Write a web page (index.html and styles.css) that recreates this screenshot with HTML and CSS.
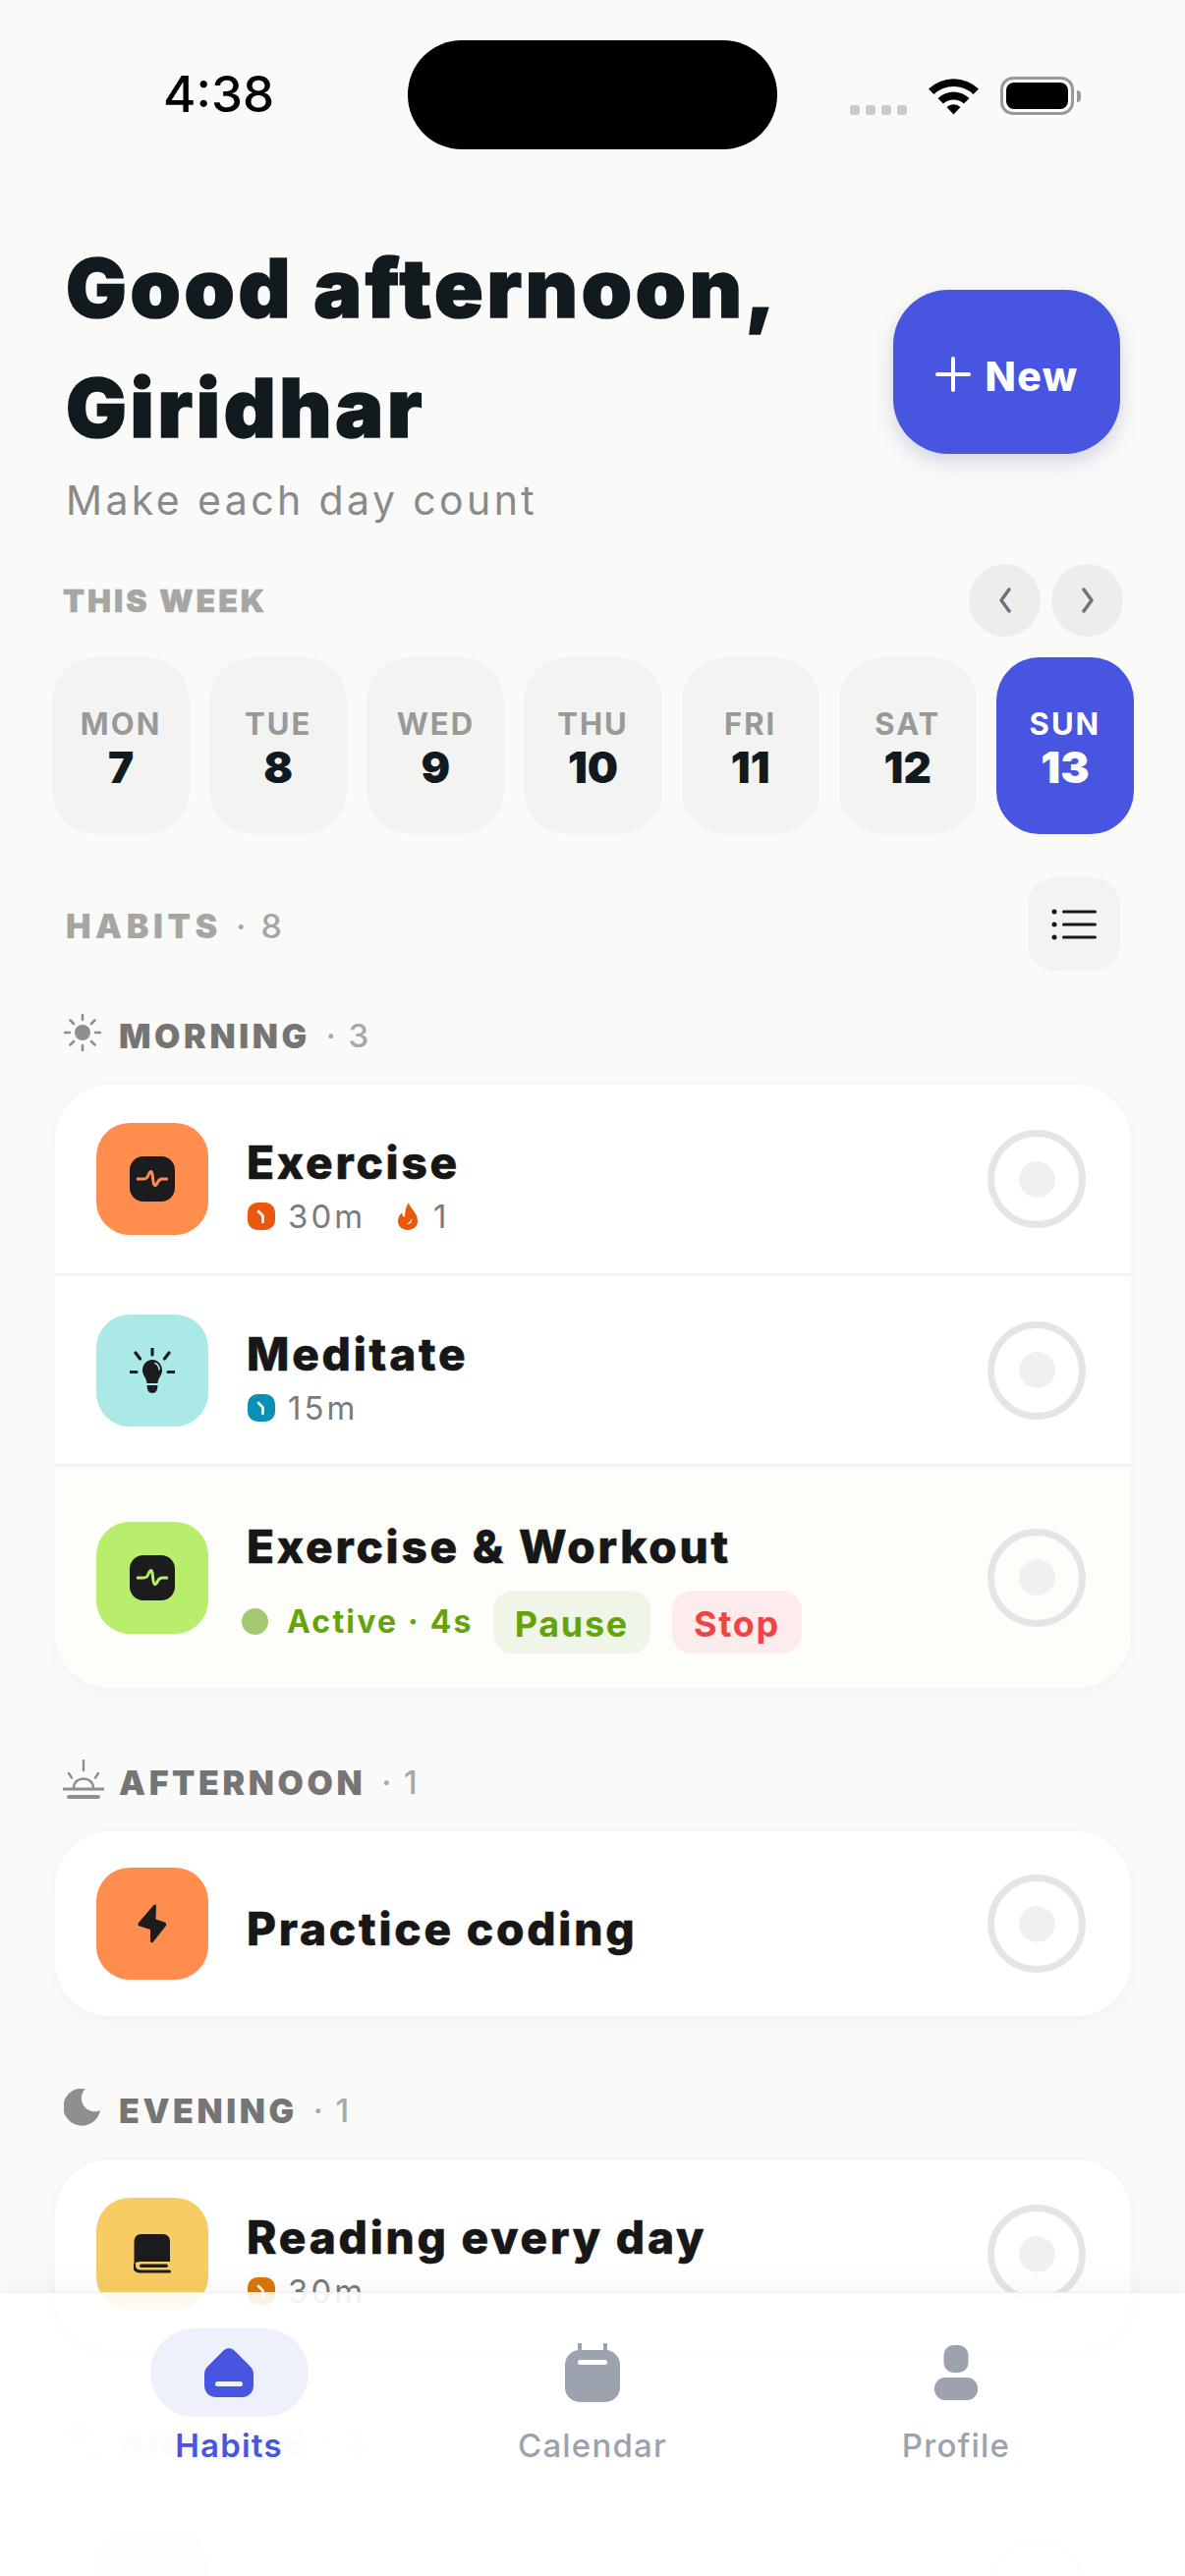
FILE: index.html
```html
<!DOCTYPE html>
<html lang="en">

<head>
  <meta charset="UTF-8">
  <meta name="viewport" content="width=device-width, initial-scale=1.0">
  <title>Habits</title>
  <link rel="stylesheet" href="styles.css">
</head>

<body>
  <div class="screen">
    <div class="status-bar">
      <div class="status-time">4:38</div>
      <div class="island"></div>
      <div class="status-icons">
        <div class="signal"><span></span><span></span><span></span><span></span></div>
        <svg class="wifi" width="51" height="38" viewBox="0 0 51 38">
          <path d="M0 11.5A37 37 0 0 1 51 11.5L45.500 17A29 29 0 0 0 5.500 17Z" />
          <path d="M9.500 21A23 23 0 0 1 41.500 21L36 26.500A15.500 15.500 0 0 0 15 26.500Z" />
          <path d="M18.500 30A10 10 0 0 1 32.500 30L25.500 37.500Z" />
        </svg>
        <div class="battery"><div class="battery-fill"></div></div>
        <div class="battery-nub"></div>
      </div>
    </div>

    <div class="greeting">
      <div class="greeting-text">
        <h1>Good afternoon,<br>Giridhar</h1>
        <p>Make each day count</p>
      </div>
      <button class="new-btn">
        <svg width="36" height="36" viewBox="0 0 36 36"><path d="M18 2V34M2 18H34" stroke="#fff" stroke-width="4" stroke-linecap="round" /></svg>
        <span>New</span>
      </button>
    </div>

    <div class="week-head">
      <div class="week-label">THIS WEEK</div>
      <div class="week-nav">
        <button class="round-btn"><svg width="20" height="26" viewBox="0 0 20 26"><path d="M14 2L6 13L14 24" class="chev" /></svg></button>
        <button class="round-btn"><svg width="20" height="26" viewBox="0 0 20 26"><path d="M6 2L14 13L6 24" class="chev" /></svg></button>
      </div>
    </div>

    <div class="days">
      <div class="day"><span class="day-name">MON</span><span class="day-num">7</span></div>
      <div class="day"><span class="day-name">TUE</span><span class="day-num">8</span></div>
      <div class="day"><span class="day-name">WED</span><span class="day-num">9</span></div>
      <div class="day"><span class="day-name">THU</span><span class="day-num">10</span></div>
      <div class="day"><span class="day-name">FRI</span><span class="day-num">11</span></div>
      <div class="day"><span class="day-name">SAT</span><span class="day-num">12</span></div>
      <div class="day active"><span class="day-name">SUN</span><span class="day-num">13</span></div>
    </div>

    <div class="habits-head">
      <div class="habits-label">HABITS <span>· 8</span></div>
      <button class="list-btn">
        <svg width="46" height="34" viewBox="0 0 46 34" fill="#171717">
          <circle cx="3" cy="4" r="2.500" /><circle cx="3" cy="17" r="2.500" /><circle cx="3" cy="30" r="2.500" />
          <rect x="11" y="2.500" width="35" height="3" rx="1.500" /><rect x="11" y="15.500" width="35" height="3" rx="1.500" /><rect x="11" y="28.500" width="35" height="3" rx="1.500" />
        </svg>
      </button>
    </div>

    <div class="group-head">
      <svg class="group-icon" width="38" height="38" viewBox="0 0 38 38" fill="#8f8f8f" stroke="#8f8f8f" stroke-width="2.600" stroke-linecap="round">
        <circle cx="19" cy="19" r="8" stroke="none" />
        <path d="M19 1V6M19 32V37M1 19H6M32 19H37M6.500 6.500L10 10M28 28L31.500 31.500M6.500 31.500L10 28M28 10L31.500 6.500" />
      </svg>
      <span class="group-name">MORNING</span><span class="group-count">· 3</span>
    </div>
    <div class="card">
      <div class="row">
        <div class="tile orange">
          <div class="tile-chip"><svg width="32" height="20" viewBox="0 0 32 20"><path d="M1 10H7C11 10 11 8 13 4C15 1 16 3 16.500 9C17 15 18 18 20 16C22 13 22 10 26 10H31" class="wave orange-line" /></svg></div>
        </div>
        <div class="row-body">
          <div class="row-title">Exercise</div>
          <div class="row-meta">
            <svg class="clock" width="28" height="28" viewBox="0 0 28 28"><rect width="28" height="28" rx="10" fill="#ea580c" /><path d="M11 9L15.500 13.500V20" class="hand" /></svg>
            <span class="meta-text">30m</span>
            <svg class="flame" width="20" height="28" viewBox="0 0 20 28"><path d="M11 0C12 6 20 10 20 19C20 24.500 15.500 28 10 28C4.500 28 0 24.500 0 19C0 15 2 12 4 10.500C4.500 13 5.500 14.500 7 15C7 9 8 4 11 0ZM14 16C13.500 19 11.500 20.500 9 21.500C11.500 22.500 15 20.500 14 16Z" fill="#ea580c" fill-rule="evenodd" /></svg>
            <span class="meta-text">1</span>
          </div>
        </div>
        <div class="check"><div class="check-dot"></div></div>
      </div>
      <div class="row">
        <div class="tile aqua">
          <svg width="46" height="46" viewBox="0 0 46 46">
            <path d="M23 0V7M6 5L10.500 11M40 5L35.500 11M0 24.500H7M39 24.500H46" stroke="#1c1c1e" stroke-width="3.200" stroke-linecap="round" />
            <path d="M23 12C29 12 33 17 33 23C33 28 29 30 28.500 36H17.500C17 30 13 28 13 23C13 17 17 12 23 12Z" fill="#1c1c1e" />
            <path d="M26 15.500C28.500 16.500 30 19 30 22" stroke="#abe9e7" stroke-width="1.600" fill="none" stroke-linecap="round" />
            <path d="M17.500 38H28.500L28 42C27 45 25 46 23 46C21 46 19 45 18 42Z" fill="#1c1c1e" />
          </svg>
        </div>
        <div class="row-body">
          <div class="row-title">Meditate</div>
          <div class="row-meta">
            <svg class="clock" width="28" height="28" viewBox="0 0 28 28"><rect width="28" height="28" rx="10" fill="#0891b2" /><path d="M11 9L15.500 13.500V20" class="hand" /></svg>
            <span class="meta-text">15m</span>
          </div>
        </div>
        <div class="check"><div class="check-dot"></div></div>
      </div>
      <div class="row running">
        <div class="tile lime">
          <div class="tile-chip"><svg width="32" height="20" viewBox="0 0 32 20"><path d="M1 10H7C11 10 11 8 13 4C15 1 16 3 16.500 9C17 15 18 18 20 16C22 13 22 10 26 10H31" class="wave lime-line" /></svg></div>
        </div>
        <div class="row-body">
          <div class="row-title">Exercise &amp; Workout</div>
          <div class="active-line">
            <div class="active-dot"></div>
            <span class="active-text">Active · 4s</span>
            <span class="pill pause">Pause</span>
            <span class="pill stop">Stop</span>
          </div>
        </div>
        <div class="check"><div class="check-dot"></div></div>
      </div>
    </div>

    <div class="group-head">
      <svg class="group-icon sunrise" width="42" height="40" viewBox="0 0 42 40" fill="none" stroke="#8f8f8f" stroke-width="2.400" stroke-linecap="round">
        <path d="M21 0V11M6 14L9 18.500M36 14L33 18.500" />
        <path d="M11 29C11 23 15.500 19.500 21 19.500C26.500 19.500 31 23 31 29" />
        <path d="M1 30H41" stroke-width="3" />
        <path d="M6 38H36" stroke-width="4" />
      </svg>
      <span class="group-name">AFTERNOON</span><span class="group-count">· 1</span>
    </div>
    <div class="card">
      <div class="row short">
        <div class="tile orange">
          <svg width="30" height="40" viewBox="0 0 30 40"><path d="M16.500 1C18 0 19 1 19 2.500L18.500 15.500L27.500 18.500C29 19 29.500 20.500 29 22L16 38.500C15 40 13 39.500 13 37.500V26L2 22.500C0.500 22 0 20.500 1 19Z" fill="#1c1c1e" /></svg>
        </div>
        <div class="row-body"><div class="row-title">Practice coding</div></div>
        <div class="check"><div class="check-dot"></div></div>
      </div>
    </div>

    <div class="group-head">
      <svg class="group-icon" width="38" height="38" viewBox="0 0 38 38"><path d="M22 0A19 19 0 1 0 37 22A13.500 13.500 0 0 1 22 0Z" fill="#8f8f8f" /></svg>
      <span class="group-name">EVENING</span><span class="group-count">· 1</span>
    </div>
    <div class="card">
      <div class="row">
        <div class="tile yellow">
          <svg width="38" height="40" viewBox="0 0 38 40">
            <path d="M8 0H30C34 0 37 3 37 7V28H8C4 28 1 29 0.500 31V8C0.500 3 3 0 8 0Z" fill="#1c1c1e" />
            <rect x="6" y="30.500" width="29" height="3.500" rx="1.700" fill="#1c1c1e" />
            <path d="M0.500 31V32C0.500 36 3.500 38 8 38H36.500" stroke="#1c1c1e" stroke-width="3" fill="none" stroke-linecap="round" />
          </svg>
        </div>
        <div class="row-body">
          <div class="row-title">Reading every day</div>
          <div class="row-meta">
            <svg class="clock" width="28" height="28" viewBox="0 0 28 28"><rect width="28" height="28" rx="10" fill="#d97706" /><path d="M11 9L15.500 13.500V20" class="hand" /></svg>
            <span class="meta-text">30m</span>
          </div>
        </div>
        <div class="check"><div class="check-dot"></div></div>
      </div>
    </div>

    <div class="group-head">
      <svg class="group-icon" width="38" height="38" viewBox="0 0 38 38" fill="#8f8f8f"><path d="M15 1L18.500 11.500L29 15L18.500 18.500L15 29L11.500 18.500L1 15L11.500 11.500Z" /><path d="M31 27L32.500 31.500L37 33L32.500 34.500L31 38L29.500 34.500L25 33L29.500 31.500Z" /></svg>
      <span class="group-name">ANYTIME</span><span class="group-count">· 3</span>
    </div>
    <div class="card">
      <div class="row">
        <div class="tile rose">
          <svg width="46" height="46" viewBox="0 0 46 46"><path d="M4 4C18 4 34 14 40 34L30 42C20 30 10 18 4 4Z" fill="#b0a0a0" /></svg>
        </div>
        <div class="row-body"></div>
        <div class="check"><div class="check-dot"></div></div>
      </div>
    </div>

    <nav class="tab-bar">
      <div class="tab active">
        <div class="tab-icon">
          <svg width="50" height="50" viewBox="0 0 50 50"><path d="M20 2C23 -0.500 27 -0.500 30 2L46 18C49 21 50 23 50 27V38C50 45 45 50 38 50H12C5 50 0 45 0 38V27C0 23 1 21 4 18Z" fill="#4755e0" /><rect x="11" y="34" width="28" height="5" rx="2.500" fill="#eef0fc" /></svg>
        </div>
        <span class="tab-label">Habits</span>
      </div>
      <div class="tab">
        <div class="tab-icon">
          <svg width="56" height="60" viewBox="0 0 56 60"><path d="M15 1V10M41 1V10" stroke="#9ca3af" stroke-width="4" stroke-linecap="round" /><rect y="7" width="56" height="53" rx="15" fill="#9ca3af" /><rect x="13" y="17" width="30" height="5" rx="2.500" fill="#fff" /></svg>
        </div>
        <span class="tab-label">Calendar</span>
      </div>
      <div class="tab">
        <div class="tab-icon">
          <svg width="44" height="56" viewBox="0 0 44 56"><rect x="9.500" y="0" width="25" height="28" rx="10" fill="#9ca3af" /><rect x="0" y="33" width="44" height="23" rx="11" fill="#9ca3af" /></svg>
        </div>
        <span class="tab-label">Profile</span>
      </div>
    </nav>
  </div>
</body>

</html>
```

FILE: styles.css
```css
* {
  box-sizing: border-box;
}

body {
  margin: 0;
  padding: 0;
  background-color: #fafaf8;
  font-family: 'Inter', 'Liberation Sans', sans-serif;
  color: #171717;
}

button {
  border: none;
  padding: 0;
  font-family: inherit;
}

.screen {
  position: relative;
  width: 1206px;
  height: 2622px;
  overflow: hidden;
  background-color: #fafaf8;
}

/* status bar */
.status-bar {
  display: flex;
  align-items: flex-start;
  height: 152px;
  padding-top: 41px;
}

.status-time {
  width: 415px;
  padding: 30px 0 0 166px;
  font-size: 51px;
  line-height: 50px;
  font-weight: 500;
  color: #000000;
}

.island {
  width: 376px;
  height: 111px;
  border-radius: 55px;
  background-color: #000000;
}

.status-icons {
  display: flex;
  align-items: flex-end;
  height: 76px;
  padding-left: 74px;
}

.signal {
  display: flex;
  gap: 6px;
}

.signal span {
  width: 10px;
  height: 10px;
  border-radius: 3px;
  background-color: #cccccc;
}

.wifi {
  margin-left: 22px;
  fill: #000000;
}

.battery {
  width: 75px;
  height: 39px;
  margin-left: 22px;
  padding: 3px;
  border: 3px solid #999999;
  border-radius: 13px;
  background-color: #ffffff;
}

.battery-fill {
  height: 100%;
  border-radius: 8px;
  background-color: #000000;
}

.battery-nub {
  width: 4px;
  height: 12px;
  margin: 0 0 13px 3px;
  border-radius: 0 6px 6px 0;
  background-color: #999999;
}

/* greeting */
.greeting {
  display: flex;
  justify-content: space-between;
  align-items: flex-start;
  padding: 81px 66px 0 67px;
}

h1 {
  margin: 0;
  font-size: 82px;
  line-height: 122px;
  font-weight: 900;
  letter-spacing: 3.7px;
  -webkit-text-stroke: 1.5px #111a1e;
  color: #111a1e;
}

.greeting-text p {
  margin: 8px 0 0;
  font-size: 41px;
  line-height: 48px;
  letter-spacing: 3.4px;
  color: #8a8a88;
}

.new-btn {
  display: flex;
  align-items: center;
  justify-content: center;
  gap: 15px;
  width: 231px;
  height: 167px;
  margin-top: 62px;
  padding-top: 4px;
  border-radius: 56px;
  background-color: #4755e0;
  color: #ffffff;
  font-size: 41px;
  font-weight: 800;
  letter-spacing: 1.3px;
  box-shadow: 0 10px 24px rgba(71, 85, 224, 0.12), 0 6px 16px rgba(0, 0, 0, 0.08);
}

.new-btn span {
  padding-top: 5px;
}

/* week strip */
.week-head {
  display: flex;
  justify-content: space-between;
  align-items: center;
  margin-top: 41px;
  padding: 0 63px 0 64px;
}

.week-label {
  font-size: 32px;
  font-weight: 900;
  letter-spacing: 3px;
  -webkit-text-stroke: 0.5px #a6a6a4;
  color: #a6a6a4;
}

.week-nav {
  display: flex;
  gap: 11px;
}

.round-btn {
  display: flex;
  align-items: center;
  justify-content: center;
  width: 73px;
  height: 74px;
  border-radius: 50%;
  background-color: #ededeb;
}

.chev {
  fill: none;
  stroke: #6b7280;
  stroke-width: 3.500;
  stroke-linecap: round;
  stroke-linejoin: round;
}

.days {
  display: flex;
  gap: 20px;
  margin-top: 21px;
  padding: 0 52px 0 53px;
}

.day {
  display: flex;
  flex-direction: column;
  align-items: center;
  flex: 1;
  height: 180px;
  padding-top: 50px;
  border-radius: 44px;
  background-color: #f3f3f1;
}

.day-name {
  font-size: 31px;
  line-height: 36px;
  font-weight: 700;
  letter-spacing: 2px;
  color: #999999;
}

.day-num {
  margin-top: 1px;
  font-size: 44px;
  line-height: 50px;
  font-weight: 900;
  color: #111a1e;
}

.day.active {
  background-color: #4755e0;
}

.day.active .day-name,
.day.active .day-num {
  color: #ffffff;
}

/* habit list */
.habits-head {
  display: flex;
  justify-content: space-between;
  align-items: center;
  margin-top: 44px;
  padding: 0 66px 0 67px;
}

.habits-label {
  padding-top: 4px;
  font-size: 34px;
  font-weight: 900;
  letter-spacing: 4.6px;
  color: #a6a6a4;
}

.habits-label span {
  margin-left: 3px;
  font-weight: 500;
  letter-spacing: 3px;
}

.list-btn {
  display: flex;
  align-items: center;
  justify-content: center;
  width: 94px;
  height: 95px;
  border-radius: 28px;
  background-color: #f3f3f1;
}

.group-head {
  display: flex;
  align-items: center;
  height: 40px;
  margin: 0 0 30px;
  padding-left: 65px;
}

.habits-head + .group-head {
  margin-top: 46px;
}

.card + .group-head {
  margin-top: 76px;
}

.group-icon {
  flex: none;
  margin: -6px 18px 0 0;
}

.group-icon.sunrise {
  margin: -6px 15px 0 -1px;
}

.group-name {
  flex: none;
  font-size: 34px;
  font-weight: 900;
  letter-spacing: 3.6px;
  color: #757575;
}

.group-count {
  margin-left: 16px;
  font-size: 33px;
  font-weight: 500;
  letter-spacing: 2px;
  color: #a8a8a8;
}

.card {
  margin: 0 55px 0 56px;
  border-radius: 56px;
  background-color: #ffffff;
  box-shadow: 0 0 0 2px #f6f6f4, 0 6px 14px rgba(0, 0, 0, 0.03);
  overflow: hidden;
}

.row {
  display: flex;
  align-items: center;
  height: 192px;
  padding: 0 46px 0 42px;
}

.row + .row {
  height: 194px;
  border-top: 3px solid #f3f3f3;
}

.row.short {
  height: 188px;
}

.row.running {
  height: 228px;
  background-color: #fdfef9;
}

.tile {
  display: flex;
  align-items: center;
  justify-content: center;
  flex: none;
  width: 114px;
  height: 114px;
  border-radius: 34px;
}

.orange {
  background-color: #ff8d4d;
}

.aqua {
  background-color: #abe9e7;
}

.lime {
  background-color: #b9ed6c;
}

.yellow {
  background-color: #f7cc63;
}

.rose {
  background-color: #fcc5c5;
}

.tile-chip {
  display: flex;
  align-items: center;
  justify-content: center;
  width: 46px;
  height: 46px;
  border-radius: 14px;
  background-color: #1c1c1e;
}

.wave {
  fill: none;
  stroke-width: 3;
  stroke-linecap: round;
}

.orange-line {
  stroke: #ff8d4d;
}

.lime-line {
  stroke: #b9ed6c;
}

.hand {
  fill: none;
  stroke: #ffffff;
  stroke-width: 2.600;
  stroke-linecap: round;
  stroke-linejoin: round;
}

.row-body {
  flex: 1;
  padding: 9px 0 0 39px;
}

.row-title {
  font-size: 46px;
  line-height: 54px;
  font-weight: 800;
  letter-spacing: 2.8px;
  -webkit-text-stroke: 0.6px #171717;
  color: #171717;
}

.row-meta {
  display: flex;
  align-items: center;
  height: 30px;
  margin-top: 13px;
  padding-left: 1px;
}

.meta-text {
  margin-left: 13px;
  font-size: 33px;
  line-height: 30px;
  letter-spacing: 3px;
  color: #7b7b7b;
}

.flame {
  margin-left: 33px;
}

.flame + .meta-text {
  margin-left: 16px;
}

.running .row-body {
  padding-top: 18px;
}

.active-line {
  display: flex;
  align-items: center;
  margin-top: 18px;
  margin-left: -5px;
}

.active-dot {
  width: 27px;
  height: 27px;
  border-radius: 50%;
  background-color: #a5c872;
}

.active-text {
  margin-left: 19px;
  font-size: 32px;
  font-weight: 700;
  letter-spacing: 2.2px;
  color: #65a30d;
}

.pill {
  height: 64px;
  padding: 0 22px;
  border-radius: 20px;
  font-size: 36px;
  line-height: 68px;
  font-weight: 700;
  letter-spacing: 1.7px;
}

.pause {
  margin-left: 20px;
  background-color: #eff6e7;
  color: #65a30d;
}

.stop {
  margin-left: 22px;
  background-color: #fdeceb;
  color: #ef4444;
}

.check {
  display: flex;
  align-items: center;
  justify-content: center;
  flex: none;
  width: 100px;
  height: 100px;
  border: 7px solid #e5e5e5;
  border-radius: 50%;
}

.check-dot {
  width: 37px;
  height: 37px;
  border-radius: 50%;
  background-color: #f0f0f0;
}

/* bottom tabs, lies over the scrolled list */
.tab-bar {
  position: absolute;
  left: 0;
  right: 0;
  bottom: 0;
  display: flex;
  height: 289px;
  padding: 36px 48px 0;
  background: linear-gradient(rgba(255, 255, 255, 0.9), rgba(255, 255, 255, 0.975) 50%, rgba(255, 255, 255, 0.98));
  border-top: 1px solid #eeeeee;
  box-shadow: 0 -10px 24px rgba(0, 0, 0, 0.03);
}

.tab {
  display: flex;
  flex-direction: column;
  align-items: center;
  flex: 1;
}

.tab-icon {
  display: flex;
  align-items: center;
  justify-content: center;
  width: 161px;
  height: 90px;
  border-radius: 45px;
}

.tab.active .tab-icon {
  background-color: #eef0fc;
}

.tab-label {
  margin-top: 9px;
  font-size: 33px;
  line-height: 40px;
  letter-spacing: 1.2px;
  font-weight: 500;
  color: #9ca3af;
}

.tab.active .tab-label {
  font-weight: 600;
  color: #4755e0;
}
```
